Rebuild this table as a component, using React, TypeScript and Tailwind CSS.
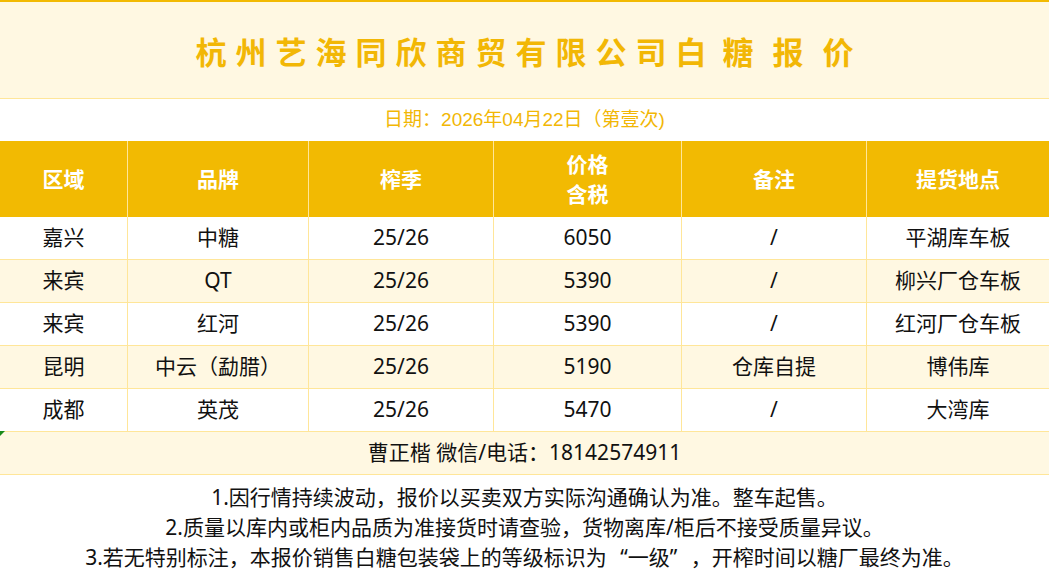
import React from "react";

const cols = "grid grid-cols-[128px_181px_185px_188px_185px_182px]";
const font = { fontFamily: '"Noto Sans", "Noto Sans CJK SC", sans-serif' };
const cjk = { fontFamily: '"Noto Sans CJK SC", sans-serif' };

const rows = [
  ["嘉兴", "中糖", "25/26", "6050", "/", "平湖库车板"],
  ["来宾", "QT", "25/26", "5390", "/", "柳兴厂仓车板"],
  ["来宾", "红河", "25/26", "5390", "/", "红河厂仓车板"],
  ["昆明", "中云（勐腊）", "25/26", "5190", "仓库自提", "博伟库"],
  ["成都", "英茂", "25/26", "5470", "/", "大湾库"],
];

export default function App() {
  return (
    <div
      className="w-[1049px] h-[575px] bg-white overflow-hidden relative text-[#111]"
      style={font}
    >
      <div className="h-[99px] bg-[#FFF8E2] border-t-2 border-t-[#F2BA02] border-b border-b-[#FFE699] flex items-center justify-center">
        <div
          className="flex items-center text-[31px] font-bold text-[#F2B705] leading-none"
          style={cjk}
        >
          <div className="flex gap-[9px]">
            {"杭州艺海同欣商贸有限公司白".split("").map((c, i) => (
              <span key={i} className="w-[31px] text-center">{c}</span>
            ))}
          </div>
          <span className="ml-[16px] w-[31px] text-center">糖</span>
          <span className="ml-[19px] w-[31px] text-center">报</span>
          <span className="ml-[19px] w-[31px] text-center">价</span>
        </div>
      </div>
      <div
        className="h-[42px] flex items-center justify-center text-[19px] text-[#F2B705]"
        style={{ fontFamily: '"Liberation Sans", "Noto Sans CJK SC", sans-serif' }}
      >
        日期：2026年04月22日（第壹次)
      </div>
      <div className={`${cols} h-[76px] bg-[#F2BA02] text-white font-bold text-[21px]`}>
        {["区域", "品牌", "榨季", "价格\n含税", "备注", "提货地点"].map((h, i) => (
          <div
            key={i}
            className={`flex items-center justify-center text-center whitespace-pre-line leading-[30px] ${
              i < 5 ? "border-r border-r-[#FFE699]" : ""
            }`}
          >
            {h}
          </div>
        ))}
      </div>
      {rows.map((r, ri) => (
        <div
          key={ri}
          className={`${cols} h-[43px] border-b border-b-[#FFE699] text-[21px] ${
            ri % 2 === 1 ? "bg-[#FFF8E2]" : "bg-white"
          }`}
        >
          {r.map((c, i) => (
            <div
              key={i}
              className={`flex items-center justify-center ${
                i < 5 ? "border-r border-r-[#FFE699]" : ""
              }`}
            >
              {c}
            </div>
          ))}
        </div>
      ))}
      <div className="h-[43px] bg-[#FFF8E2] border-b border-b-[#FFE699] flex items-center justify-center text-[21px]">
        曹正楷 微信/电话：18142574911
      </div>
      <div className="absolute left-0 top-[431px] w-0 h-0 border-t-[5px] border-t-[#1a8a1a] border-r-[5px] border-r-transparent" />
      <div className="pt-[7px] flex flex-col items-center text-[21px] leading-[30px]">
        <div>1.因行情持续波动，报价以买卖双方实际沟通确认为准。整车起售。</div>
        <div>2.质量以库内或柜内品质为准接货时请查验，货物离库/柜后不接受质量异议。</div>
        <div>
          3.若无特别标注，本报价销售白糖包装袋上的等级标识为
          <span className="inline-block w-[21px] text-right">“</span>
          一级
          <span className="inline-block w-[21px] text-left">”</span>
          ，开榨时间以糖厂最终为准。
        </div>
      </div>
    </div>
  );
}
